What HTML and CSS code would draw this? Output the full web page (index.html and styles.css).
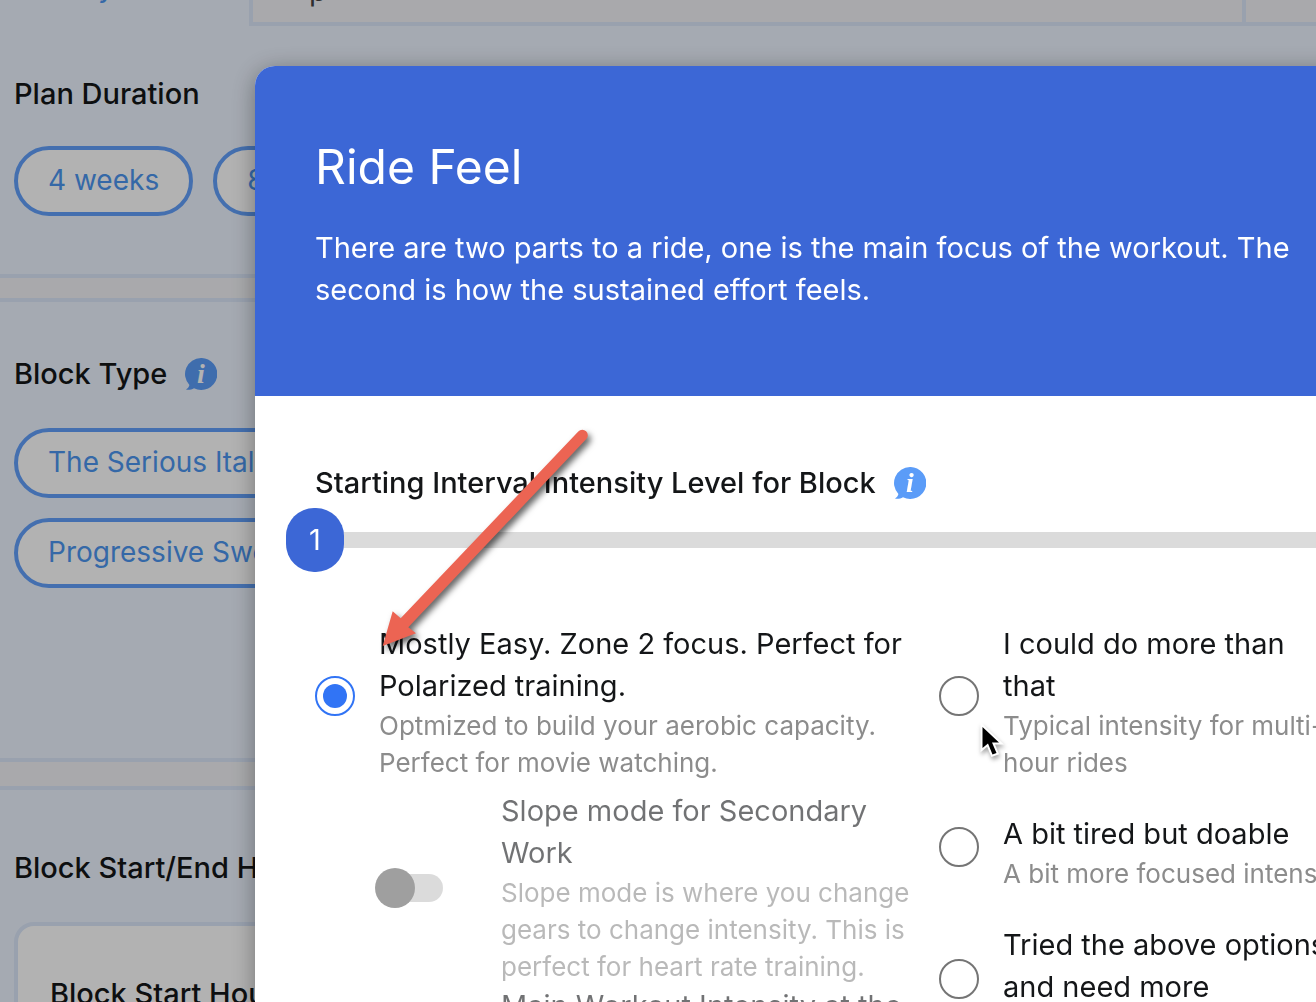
FILE: index.html
```html
<!DOCTYPE html>
<html lang="en">
<head>
    <meta charset="UTF-8">
    <meta name="viewport" content="width=device-width, initial-scale=1.0">
    <title>Ride Feel</title>
    <link rel="stylesheet" href="styles.css">
</head>
<body>
    <!-- Icons used more than once -->
    <svg class="sprite" aria-hidden="true">
        <symbol id="icon-info" viewBox="0 0 32 32">
            <path d="M16 0a16 16 0 1 1-7 30.200C6.500 31.700 3.500 32 1 31.500c2-1.300 3-2.700 3.400-4.500A16 16 0 0 1 16 0z" fill="#5b9cf8"/>
            <text x="16" y="25" text-anchor="middle" class="info-letter">i</text>
        </symbol>
    </svg>

    <main class="page">
        <nav class="tabs">
            <a href="#" class="tab tab-active">y</a>
            <a href="#" class="tab tab-wide">p</a>
            <a href="#" class="tab"></a>
        </nav>

        <section class="panel panel-duration">
            <h2 class="label">Plan Duration</h2>
            <div class="pills">
                <button type="button" class="pill">4 weeks</button>
                <button type="button" class="pill">8 weeks</button>
            </div>
        </section>

        <section class="panel panel-type">
            <h2 class="label">Block Type
                <button type="button" class="info"><svg class="info-icon"><use href="#icon-info"/></svg></button>
            </h2>
            <div class="pills pills-column">
                <button type="button" class="pill">The Serious Italian</button>
                <button type="button" class="pill">Progressive Sweet</button>
            </div>
        </section>

        <section class="panel panel-hours">
            <h2 class="label">Block Start/End Hours</h2>
            <div class="card">
                <h3 class="label">Block Start Hours</h3>
            </div>
        </section>
    </main>

    <div class="backdrop"></div>

    <div class="modal" role="dialog" aria-labelledby="modal-title">
        <header class="modal-header">
            <h1 class="modal-title" id="modal-title">Ride Feel</h1>
            <p class="modal-intro">There are two parts to a ride, one is the main focus of the workout. The second is how the sustained effort feels.</p>
        </header>

        <form class="modal-body">
            <div class="label">
                <label for="level">Starting Interval Intensity Level for Block</label>
                <button type="button" class="info"><svg class="info-icon"><use href="#icon-info"/></svg></button>
            </div>
            <div class="slider">
                <input type="range" id="level" class="slider-input" min="1" max="10" value="1">
                <output for="level" class="slider-value">1</output>
            </div>

            <div class="columns">
                <div class="column">
                    <label class="option">
                        <input type="radio" name="feel" class="radio" checked>
                        <span class="option-text">
                            <span class="option-title">Mostly Easy. Zone 2 focus. Perfect for Polarized training.</span>
                            <span class="option-note">Optmized to build your aerobic capacity. Perfect for movie watching.</span>
                        </span>
                    </label>
                    <div class="switches">
                        <label class="switch-row">
                            <input type="checkbox" class="switch" disabled>
                            <span class="option-text">
                                <span class="option-title">Slope mode for Secondary Work</span>
                                <span class="option-note">Slope mode is where you change gears to change intensity. This is perfect for heart rate training.</span>
                            </span>
                        </label>
                        <div class="switch-row switch-next">
                            <span class="option-title">Main Workout Intensity at the</span>
                        </div>
                    </div>
                </div>

                <div class="column column-options">
                    <label class="option">
                        <input type="radio" name="feel" class="radio">
                        <span class="option-text">
                            <span class="option-title">I could do more than<br>that</span>
                            <span class="option-note">Typical intensity for multi-hour rides</span>
                        </span>
                    </label>
                    <label class="option">
                        <input type="radio" name="feel" class="radio">
                        <span class="option-text">
                            <span class="option-title">A bit tired but doable</span>
                            <span class="option-note">A bit more focused intensity</span>
                        </span>
                    </label>
                    <label class="option">
                        <input type="radio" name="feel" class="radio">
                        <span class="option-text">
                            <span class="option-title">Tried the above options and need more</span>
                            <span class="option-note">Harder efforts</span>
                        </span>
                    </label>
                </div>
            </div>
        </form>
    </div>

    <!-- Arrow pointing at the first option -->
    <svg class="arrow" viewBox="0 0 220 230" aria-hidden="true">
        <path d="M12.700 226 22.700 191.300 30.700 198.300 208.300 11.500A5.500 5.500 0 0 1 216.300 19.100L38.300 207.300 46 213.300z" fill="#ec6453"/>
    </svg>

    <svg class="cursor" viewBox="0 0 28 40" aria-hidden="true">
        <path d="M4.500 6v21l5.500-4.500 4.500 11 4-1.500-4.500-10.500h7z" fill="#000" stroke="#fff" stroke-width="4" stroke-linejoin="miter" paint-order="stroke"/>
    </svg>
</body>
</html>
```
FILE: styles.css
```css
* {
    box-sizing: border-box;
}

body {
    margin: 0;
    height: 100vh;
    overflow: hidden;
    font-family: Inter, sans-serif;
    font-size: 29px;
    line-height: 42px;
    color: #141618;
    background-color: #f2f3f6;
}

h1, h2, h3, p {
    margin: 0;
}

button {
    font: inherit;
    cursor: pointer;
}

.sprite {
    display: block;
    width: 0;
    height: 0;
}

/* Page behind the dialog */
.page {
    display: flex;
    flex-direction: column;
    gap: 20px;
    height: 100vh;
    overflow: hidden;
}

.tabs {
    display: flex;
    flex: none;
    height: 26px;
    margin-bottom: -20px;
    background-color: #edf4ff;
}

.tab {
    display: flex;
    align-items: flex-end;
    flex: 1;
    padding: 0 0 6px 56px;
    border-left: 4px solid #dbe7fa;
    border-bottom: 4px solid #dbe7fa;
    background-color: #f2f3f6;
    color: #444;
    line-height: 50px;
    text-decoration: none;
}

.tab-active {
    flex: 0 0 249px;
    padding: 0 0 14px 98px;
    border: none;
    background: none;
    color: #4c96f0;
}

.tab-wide {
    flex: 0 0 993px;
}

.panel {
    flex: none;
    padding: 0 14px;
    border-top: 4px solid #dbe7fa;
    border-bottom: 4px solid #dbe7fa;
    background-color: #edf4ff;
}

.panel-duration {
    padding-top: 47px;
    padding-bottom: 58px;
    border-top: none;
}

.panel-type {
    padding-top: 51px;
    padding-bottom: 170px;
}

.panel-hours {
    margin-top: 4px;
    padding-top: 57px;
}

.label {
    display: flex;
    align-items: center;
    gap: 18px;
    font-size: 29px;
    font-weight: 500;
    line-height: 42px;
}

.info {
    display: flex;
    padding: 0;
    border: none;
    background: none;
}

.info-icon {
    width: 32px;
    height: 32px;
}

.info-letter {
    fill: #fff;
    font: italic bold 28px "Liberation Serif", serif;
}

.pills {
    display: flex;
    gap: 20px;
    margin-top: 31px;
}

.pills-column {
    flex-direction: column;
    align-items: flex-start;
    margin-top: 33px;
}

.pill {
    height: 70px;
    padding: 0 30px 2px;
    border: 4px solid #62a0fb;
    border-radius: 35px;
    background-color: #fff;
    color: #4c96f0;
    font-size: 28px;
}

.card {
    margin-top: 33px;
    padding: 47px 32px;
    border: 4px solid #dbe7fa;
    border-radius: 20px;
    background-color: #fff;
}

.backdrop {
    position: fixed;
    inset: 0;
    background-color: rgba(0, 0, 0, 0.3);
}

/* The dialog runs off the right and bottom edges of the window */
.modal {
    position: fixed;
    top: 66px;
    left: 255px;
    right: -94px;
    bottom: -100px;
    overflow: hidden;
    border-radius: 20px;
    background-color: #fff;
    box-shadow: 0 4px 24px rgba(0, 0, 0, 0.35);
}

.modal-header {
    padding: 65px 60px 85px;
    background-color: #3c67d6;
    color: #fff;
}

.modal-title {
    margin-bottom: 24px;
    font-size: 48px;
    font-weight: 400;
    line-height: 72px;
}

.modal-body {
    padding: 66px 60px;
}

.slider {
    position: relative;
    margin: 4px 0 0 -29px;
}

.slider-input {
    display: block;
    width: 100%;
    height: 64px;
    margin: 0;
    appearance: none;
    background: none;
}

.slider-input::-webkit-slider-runnable-track {
    height: 16px;
    background-color: #dbdbdb;
}

.slider-input::-webkit-slider-thumb {
    appearance: none;
    width: 58px;
    height: 64px;
    margin-top: -24px;
    border-radius: 28px;
    background-color: #3c67d6;
}

/* Number shown over the thumb */
.slider-value {
    position: absolute;
    top: 0;
    left: 0;
    width: 58px;
    color: #fff;
    line-height: 64px;
    text-align: center;
    pointer-events: none;
}

.columns {
    display: grid;
    grid-template-columns: 73fr 50fr;
    gap: 24px;
    margin-top: 51px;
}

.column-options {
    display: flex;
    flex-direction: column;
    gap: 32px;
}

.option {
    display: flex;
    align-items: center;
    gap: 24px;
}

.option-text {
    flex: 1;
}

.option-title, .option-note {
    display: block;
}

.option-note {
    color: #8c8c8c;
    font-size: 26px;
    line-height: 37px;
}

.radio {
    display: grid;
    place-content: center;
    flex: none;
    width: 40px;
    height: 40px;
    margin: 0 0 12px;
    appearance: none;
    border: 2px solid #757575;
    border-radius: 50%;
}

.radio:checked {
    border-color: #3174f5;
}

.radio:checked::before {
    content: "";
    width: 24px;
    height: 24px;
    border-radius: 50%;
    background-color: #3174f5;
}

.switches {
    padding: 9px 0 0 60px;
}

.switch-row {
    display: flex;
    align-items: center;
    gap: 58px;
    opacity: 0.6;
}

.switch-next {
    padding-left: 126px;
}

.switch {
    display: grid;
    align-items: center;
    flex: none;
    width: 68px;
    height: 40px;
    margin: 0;
    appearance: none;
}

.switch::before, .switch::after {
    content: "";
    grid-area: 1 / 1;
}

.switch::before {
    height: 28px;
    margin-left: 8px;
    border-radius: 14px;
    background-color: #c4c4c4;
}

.switch::after {
    width: 40px;
    height: 40px;
    border-radius: 50%;
    background-color: #616161;
}

.arrow {
    position: fixed;
    top: 420px;
    left: 370px;
    width: 220px;
    height: 230px;
    overflow: visible;
    filter: drop-shadow(3px 4px 3px rgba(0, 0, 0, 0.6));
    pointer-events: none;
}

.cursor {
    position: fixed;
    top: 721px;
    left: 978px;
    width: 28px;
    height: 40px;
    overflow: visible;
    filter: drop-shadow(1px 3px 2px rgba(0, 0, 0, 0.35));
    pointer-events: none;
}
```
